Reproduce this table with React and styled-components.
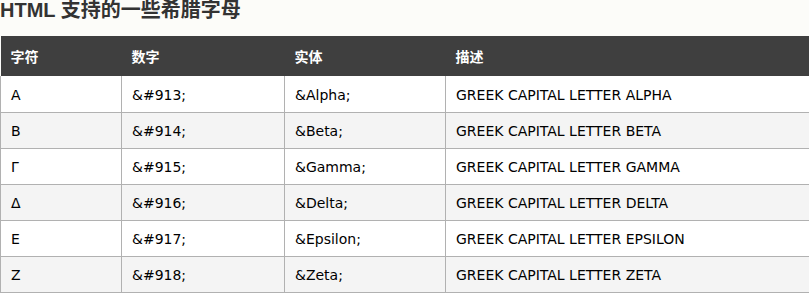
import React from "react";
import styled, { createGlobalStyle } from "styled-components";

const Global = createGlobalStyle`
  html, body { margin: 0; padding: 0; background: #fcfcf9; overflow: hidden; }
  body { font-family: "DejaVu Sans", Verdana, "Noto Sans CJK SC", sans-serif; }
`;

const Page = styled.div`
  width: 809px;
  overflow: hidden;
`;

const Title = styled.h2`
  margin: 0 0 15px 0;
  padding: 0;
  font-family: "Liberation Sans", Arial, "Noto Sans CJK SC", sans-serif;
  font-size: 20px;
  line-height: 21px;
  font-weight: bold;
  color: #333;
`;

const Table = styled.table`
  width: 830px;
  border-collapse: collapse;
  font-size: 14px;
  color: #000;
`;

const HeadCell = styled.th`
  background: #3f3f3f;
  color: #fff;
  text-align: left;
  font-family: "Noto Sans CJK SC", "DejaVu Sans", sans-serif;
  font-weight: bold;
  font-size: 14px;
  height: 40px;
  padding: 0 0 0 10px;
  box-sizing: border-box;
  border: none;
  width: ${(p) => p.$w || "auto"};
`;

const Row = styled.tr`
  background: ${(p) => (p.$alt ? "#f4f4f4" : "#ffffff")};
`;

const Cell = styled.td`
  height: 36px;
  padding: 2px 0 0 10px;
  box-sizing: border-box;
  border: 1px solid #b1b1b1;
  border-top: none;
  white-space: nowrap;
`;

const rows = [
  ["Α", "&#913;", "&Alpha;", "GREEK CAPITAL LETTER ALPHA"],
  ["Β", "&#914;", "&Beta;", "GREEK CAPITAL LETTER BETA"],
  ["Γ", "&#915;", "&Gamma;", "GREEK CAPITAL LETTER GAMMA"],
  ["Δ", "&#916;", "&Delta;", "GREEK CAPITAL LETTER DELTA"],
  ["Ε", "&#917;", "&Epsilon;", "GREEK CAPITAL LETTER EPSILON"],
  ["Ζ", "&#918;", "&Zeta;", "GREEK CAPITAL LETTER ZETA"],
];

export default function App() {
  return (
    <Page>
      <Global />
      <Title>HTML 支持的一些希腊字母</Title>
      <Table>
        <thead>
          <tr>
            <HeadCell $w="121px">字符</HeadCell>
            <HeadCell $w="163px">数字</HeadCell>
            <HeadCell $w="161px">实体</HeadCell>
            <HeadCell>描述</HeadCell>
          </tr>
        </thead>
        <tbody>
          {rows.map((r, i) => (
            <Row key={i} $alt={i % 2 === 1}>
              {r.map((c, j) => (
                <Cell key={j}>{c}</Cell>
              ))}
            </Row>
          ))}
        </tbody>
      </Table>
    </Page>
  );
}
